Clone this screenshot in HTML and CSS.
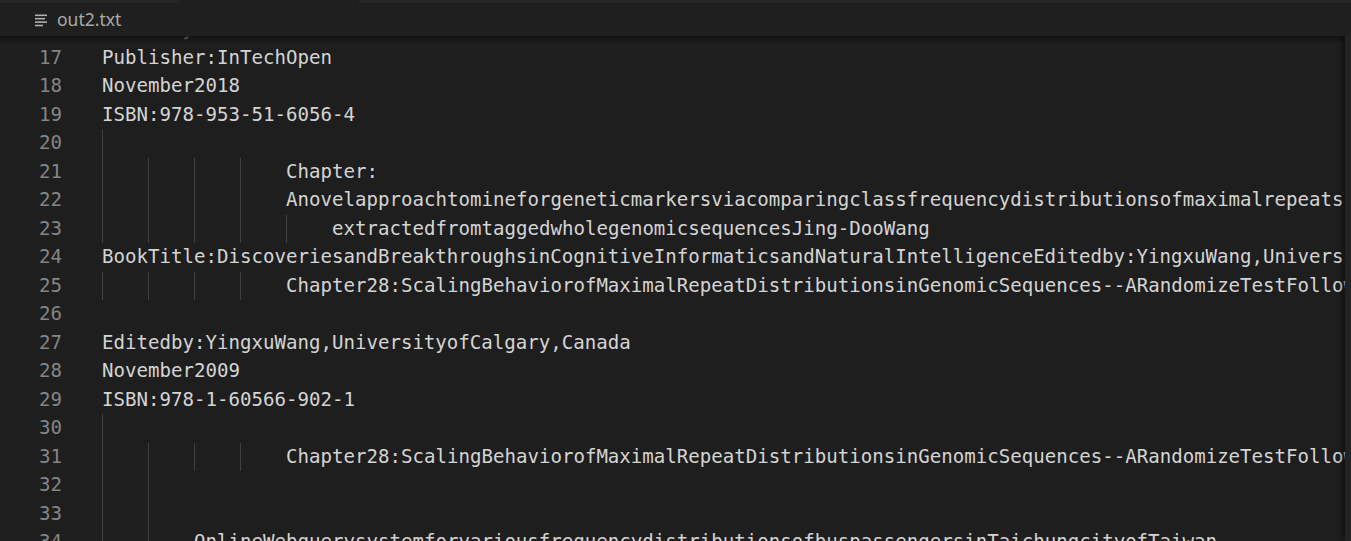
FILE: index.html
```html
<!DOCTYPE html>
<html>
<head>
<meta charset="utf-8">
<title>out2.txt</title>
<link rel="stylesheet" href="styles.css">
</head>
<body>
<div class="topstrip"><div class="seg a"></div><div class="seg b"></div><div class="seg c"></div></div>
<div class="tabbar">
  <div class="tab">
    <svg class="ticon" width="14" height="13" viewBox="0 0 14 13">
      <rect x="1" y="0.5" width="12" height="1.6" fill="#b0b0b0"/>
      <rect x="1" y="3.9" width="10" height="1.6" fill="#b0b0b0"/>
      <rect x="1" y="7.3" width="12" height="1.6" fill="#b0b0b0"/>
      <rect x="1" y="10.7" width="8" height="1.6" fill="#b0b0b0"/>
    </svg>
    <span class="tname">out2.txt</span>
  </div>
</div>
<div class="editor">
  <div class="content">
    <div class="lines">
      <div class="row"><span class="ln">16</span><span class="code">Editedby:HoMinhHaiandTranThiHienna</span></div>
      <div class="row"><span class="ln">17</span><span class="code">Publisher:InTechOpen</span></div>
      <div class="row"><span class="ln">18</span><span class="code">November2018</span></div>
      <div class="row"><span class="ln">19</span><span class="code">ISBN:978-953-51-6056-4</span></div>
      <div class="row"><span class="ln">20</span><span class="g"></span></div>
      <div class="row"><span class="ln">21</span><span class="g"></span><span class="g"></span><span class="g"></span><span class="g"></span><span class="code">Chapter:</span></div>
      <div class="row"><span class="ln">22</span><span class="g"></span><span class="g"></span><span class="g"></span><span class="g"></span><span class="code">Anovelapproachtomineforgeneticmarkersviacomparingclassfrequencydistributionsofmaximalrepeats</span></div>
      <div class="row"><span class="ln">23</span><span class="g"></span><span class="g"></span><span class="g"></span><span class="g"></span><span class="g"></span><span class="code">extractedfromtaggedwholegenomicsequencesJing-DooWang</span></div>
      <div class="row"><span class="ln">24</span><span class="code">BookTitle:DiscoveriesandBreakthroughsinCognitiveInformaticsandNaturalIntelligenceEditedby:YingxuWang,UniversityofCalgary,Canada</span></div>
      <div class="row"><span class="ln">25</span><span class="g"></span><span class="g"></span><span class="g"></span><span class="g"></span><span class="code">Chapter28:ScalingBehaviorofMaximalRepeatDistributionsinGenomicSequences--ARandomizeTestFollowUpStudy</span></div>
      <div class="row"><span class="ln">26</span></div>
      <div class="row"><span class="ln">27</span><span class="code">Editedby:YingxuWang,UniversityofCalgary,Canada</span></div>
      <div class="row"><span class="ln">28</span><span class="code">November2009</span></div>
      <div class="row"><span class="ln">29</span><span class="code">ISBN:978-1-60566-902-1</span></div>
      <div class="row"><span class="ln">30</span><span class="g"></span></div>
      <div class="row"><span class="ln">31</span><span class="g"></span><span class="g"></span><span class="g"></span><span class="g"></span><span class="code">Chapter28:ScalingBehaviorofMaximalRepeatDistributionsinGenomicSequences--ARandomizeTestFollowUpStudy</span></div>
      <div class="row"><span class="ln">32</span><span class="g"></span><span class="g"></span></div>
      <div class="row"><span class="ln">33</span><span class="g"></span><span class="g"></span></div>
      <div class="row"><span class="ln">34</span><span class="g"></span><span class="g"></span><span class="code">OnlineWebquerysystemforvariousfrequencydistributionsofbuspassengersinTaichungcityofTaiwan</span></div>
    </div>
  </div>
  <div class="vscroll"></div>
</div>
</body>
</html>
```
FILE: styles.css
```css
html, body {
  margin: 0;
  padding: 0;
  background: #1e1e1e;
  width: 1351px;
  height: 541px;
  overflow: hidden;
}
body {
  display: flex;
  flex-direction: column;
}
.topstrip {
  height: 3px;
  display: flex;
  flex: none;
}
.seg.a { width: 180px; background: #262626; }
.seg.b { width: 179px; background: #1f1f1f; }
.seg.c { flex: 1; background: #262626; }
.tabbar {
  height: 33px;
  flex: none;
  background: #1f1f1f;
  display: flex;
  position: relative;
  z-index: 2;
}
.tab {
  display: flex;
  align-items: center;
  padding-left: 34px;
  padding-right: 20px;
  gap: 9px;
  height: 100%;
}
.ticon {
  display: block;
  margin-top: 2px;
}
.tname {
  font-family: "Noto Sans", "Open Sans", sans-serif;
  font-size: 17.5px;
  color: #a9a9a9;
  line-height: 1;
  margin-top: 1px;
}
.editor {
  flex: 1;
  display: flex;
  min-height: 0;
  position: relative;
}
.editor::after {
  content: "";
  position: absolute;
  left: 0;
  right: 6px;
  top: 0;
  height: 8px;
  background: linear-gradient(#111111, rgba(30,30,30,0));
  pointer-events: none;
  opacity: 0.9;
}
.content {
  flex: 1;
  overflow: hidden;
  min-width: 0;
}
.vscroll {
  width: 6px;
  flex: none;
  background: #232323;
  box-shadow: -3px 0 5px rgba(0,0,0,0.45);
  position: relative;
  z-index: 1;
}
.lines {
  margin-top: -21px;
  font-family: "DejaVu Sans Mono", "Liberation Mono", monospace;
  font-size: 19.1px;
  line-height: 28.5px;
  color: #d4d4d4;
}
.row {
  display: flex;
  height: 28.5px;
  white-space: pre;
}
.ln {
  width: 62px;
  flex: none;
  text-align: right;
  color: #858585;
  margin-right: 40px;
}
.g {
  width: 46px;
  flex: none;
  box-sizing: border-box;
  border-left: 1px solid #404040;
}
.code {
  flex: none;
}
```
